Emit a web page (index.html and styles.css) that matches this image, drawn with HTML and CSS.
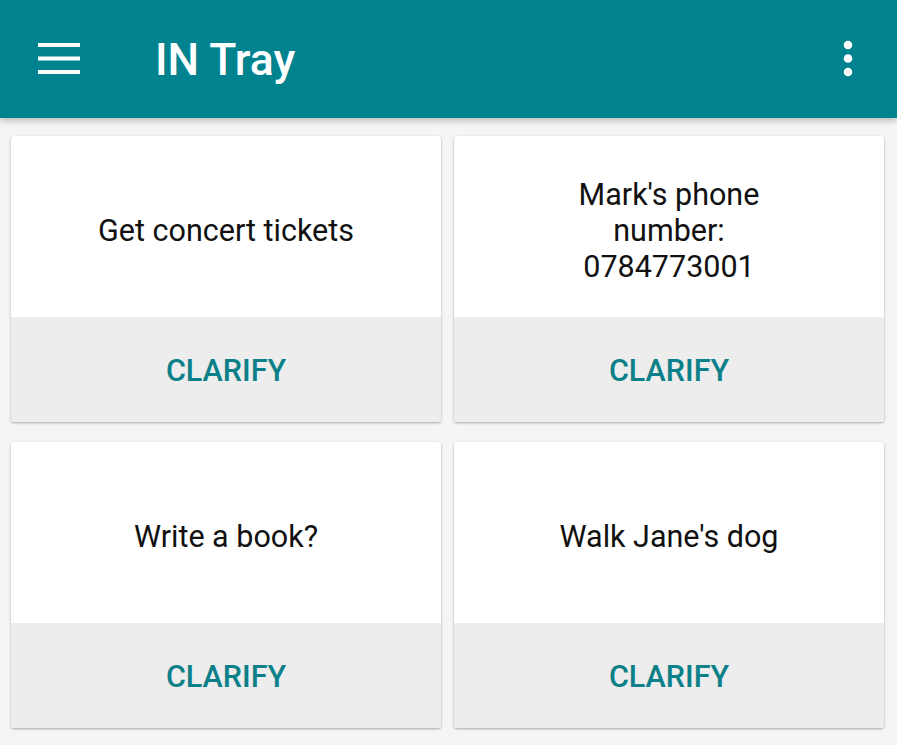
FILE: index.html
```html
<!DOCTYPE html>
<html>
<head>
<meta charset="utf-8">
<link rel="stylesheet" href="styles.css">
</head>
<body>
<header class="appbar">
  <svg class="menu" width="42" height="32" viewBox="0 0 42 32">
    <rect x="0" y="0" width="42" height="4" fill="#fff"/>
    <rect x="0" y="13.5" width="42" height="4" fill="#fff"/>
    <rect x="0" y="27" width="42" height="4" fill="#fff"/>
  </svg>
  <h1 class="title">IN Tray</h1>
  <svg class="more" width="10" height="38" viewBox="0 0 10 38">
    <circle cx="5" cy="5" r="4.3" fill="#fff"/>
    <circle cx="5" cy="18.5" r="4.3" fill="#fff"/>
    <circle cx="5" cy="32" r="4.3" fill="#fff"/>
  </svg>
</header>
<main class="grid">
  <div class="card">
    <div class="card-body"><p class="card-text">Get concert tickets</p></div>
    <div class="card-action">CLARIFY</div>
  </div>
  <div class="card">
    <div class="card-body"><p class="card-text">Mark's phone number: 0784773001</p></div>
    <div class="card-action">CLARIFY</div>
  </div>
  <div class="card">
    <div class="card-body"><p class="card-text">Write a book?</p></div>
    <div class="card-action">CLARIFY</div>
  </div>
  <div class="card">
    <div class="card-body"><p class="card-text">Walk Jane's dog</p></div>
    <div class="card-action">CLARIFY</div>
  </div>
</main>
</body>
</html>
```

FILE: styles.css
```css
html, body {
  margin: 0;
  padding: 0;
}
body {
  background: #f5f5f5;
  font-family: Roboto, "Noto Sans", sans-serif;
  width: 897px;
  height: 745px;
  overflow: hidden;
}
.appbar {
  height: 118px;
  background: #00838f;
  display: flex;
  align-items: center;
  box-shadow: 0 3px 6px rgba(0,0,0,0.22);
  position: relative;
  z-index: 1;
}
.menu {
  margin-left: 38px;
  flex: none;
}
.title {
  margin: 0 0 0 75px;
  color: #fff;
  font-size: 44.5px;
  font-weight: 500;
  flex: 1;
  line-height: 1;
  padding-top: 2px;
}
.more {
  margin-right: 44px;
  flex: none;
}
.grid {
  display: grid;
  grid-template-columns: 430px 430px;
  column-gap: 13px;
  row-gap: 20px;
  padding: 18px 13px 0 11px;
}
.card {
  height: 286px;
  background: #fff;
  border-radius: 3px;
  box-shadow: 0 1px 3px rgba(0,0,0,0.22), 0 1px 2px rgba(0,0,0,0.12);
  display: flex;
  flex-direction: column;
  overflow: hidden;
}
.card-body {
  height: 181px;
  display: flex;
  align-items: center;
  justify-content: center;
  padding-top: 8px;
  box-sizing: border-box;
}
.card-text {
  margin: 0;
  max-width: 275px;
  text-align: center;
  font-size: 30.5px;
  line-height: 36px;
  color: #111;
}
.card-action {
  flex: 1;
  background: #ededed;
  display: flex;
  align-items: center;
  justify-content: center;
  color: #0b8088;
  font-size: 30.5px;
  font-weight: 500;
  padding-top: 1px;
}
```
